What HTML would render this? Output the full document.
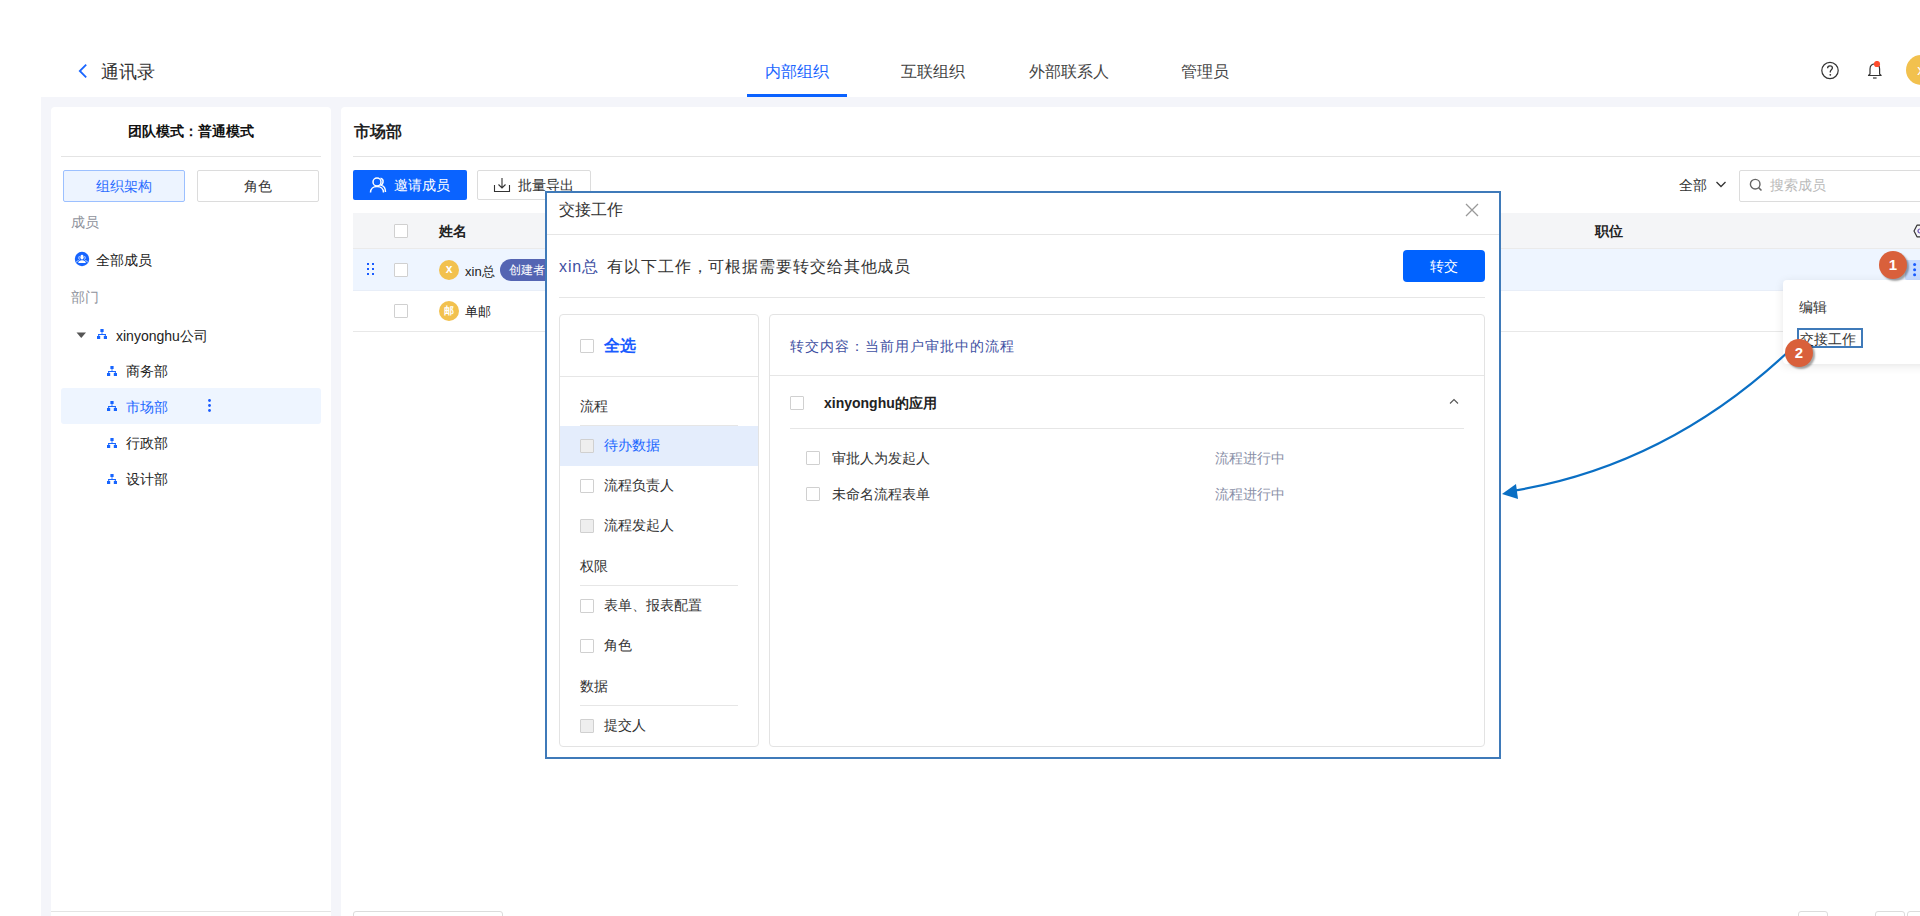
<!DOCTYPE html>
<html><head><meta charset="utf-8">
<style>
*{box-sizing:border-box;margin:0;padding:0}
html,body{width:1920px;height:916px;overflow:hidden;background:#fff;font-family:"Liberation Sans",sans-serif;color:#333}
.a{position:absolute;white-space:nowrap}
.t14{font-size:14px;line-height:14px}
.t13{font-size:13px;line-height:13px}
.t16{font-size:16px;line-height:16px}
.cb{position:absolute;width:14px;height:14px;border:1px solid #d0d0d0;border-radius:1px;background:#fff}
.cb.dis{background:#eeeeee}
</style></head>
<body>
<!-- HEADER -->
<svg class="a" style="left:76px;top:62px" width="14" height="18" viewBox="0 0 14 18"><polyline points="10.2,2.6 3.8,9 10.2,15.4" fill="none" stroke="#1a66ff" stroke-width="1.8"/></svg>
<div class="a" style="left:101px;top:63px;font-size:18px;line-height:18px;color:#333">通讯录</div>

<div class="a t16" style="left:765px;top:64px;color:#1a66ff">内部组织</div>
<div class="a" style="left:747px;top:94px;width:100px;height:3px;background:#0a62ff"></div>
<div class="a t16" style="left:901px;top:64px;color:#444">互联组织</div>
<div class="a t16" style="left:1029px;top:64px;color:#444">外部联系人</div>
<div class="a t16" style="left:1181px;top:64px;color:#444">管理员</div>

<svg class="a" style="left:1820px;top:61px" width="20" height="20" viewBox="0 0 20 20"><circle cx="10" cy="9.5" r="8.2" fill="none" stroke="#333" stroke-width="1.2"/><path d="M7.6 7.3 C7.6 5.6 8.8 4.9 10 4.9 C11.3 4.9 12.4 5.7 12.4 7 C12.4 8.6 10.3 8.8 10.3 10.6 L10.3 11.4" fill="none" stroke="#333" stroke-width="1.3"/><circle cx="10.3" cy="13.8" r="0.9" fill="#333"/></svg>
<svg class="a" style="left:1866px;top:61px" width="18" height="20" viewBox="0 0 18 20"><path d="M2.5 14.5 L4 13 L4 8 C4 4.8 6 2.9 8.8 2.9 C11.6 2.9 13.6 4.8 13.6 8 L13.6 13 L15.1 14.5 Z" fill="none" stroke="#333" stroke-width="1.2" stroke-linejoin="round"/><path d="M7 17 L10.6 17" stroke="#333" stroke-width="1.2"/><circle cx="11" cy="3" r="3.1" fill="#ff4d2e"/></svg>
<div class="a" style="left:1906px;top:55px;width:30px;height:30px;border-radius:50%;background:#f2c14e;color:#fff;font-size:15px;line-height:30px;text-align:center">x</div>

<!-- GRAY BG -->
<div class="a" style="left:41px;top:97px;width:1879px;height:819px;background:#f4f5fa"></div>

<!-- LEFT PANEL -->
<div class="a" style="left:51px;top:107px;width:280px;height:860px;background:#fff;border-radius:4px"></div>
<div class="a t14" style="left:128px;top:124px;font-weight:bold;color:#111">团队模式：普通模式</div>
<div class="a" style="left:61px;top:156px;width:260px;height:1px;background:#e4e4e4"></div>
<div class="a" style="left:63px;top:170px;width:122px;height:32px;border:1px solid #9cc0ff;background:#edf4ff;border-radius:2px"></div>
<div class="a t14" style="left:96px;top:179px;color:#2b6cff">组织架构</div>
<div class="a" style="left:197px;top:170px;width:122px;height:32px;border:1px solid #dcdcdc;background:#fff;border-radius:2px"></div>
<div class="a t14" style="left:244px;top:179px;color:#333">角色</div>
<div class="a t14" style="left:71px;top:215px;color:#8f939c">成员</div>
<svg class="a" style="left:74px;top:251px" width="16" height="16" viewBox="0 0 16 16"><circle cx="8" cy="8" r="7.2" fill="#1664ff"/><ellipse cx="8" cy="6.2" rx="1.6" ry="2.4" fill="#fff"/><path d="M4.2 11.9 C4.3 10.2 5.9 9.2 8 9.2 C10.1 9.2 11.7 10.2 11.8 11.9 Z" fill="#fff"/><path d="M5.6 8.6 C4.6 8.1 4.5 5.8 5.6 5.1 M10.4 8.6 C11.4 8.1 11.5 5.8 10.4 5.1 M2.5 11.3 C2.9 10.1 3.7 9.6 4.6 9.4 M13.5 11.3 C13.1 10.1 12.3 9.6 11.4 9.4" fill="none" stroke="#fff" stroke-width="0.8"/></svg>
<div class="a t14" style="left:96px;top:253px;color:#222">全部成员</div>
<div class="a t14" style="left:71px;top:290px;color:#8f939c">部门</div>
<svg class="a" style="left:76px;top:332px" width="11" height="7" viewBox="0 0 11 7"><path d="M0.5 0.5 L10 0.5 L5.25 6 Z" fill="#555"/></svg>
<div class="a t14" style="left:116px;top:329px;color:#222">xinyonghu公司</div>
<div class="a t14" style="left:126px;top:364px;color:#222">商务部</div>
<div class="a" style="left:61px;top:388px;width:260px;height:36px;background:#eef5ff;border-radius:3px"></div>
<div class="a t14" style="left:126px;top:400px;color:#1a66ff">市场部</div>
<div class="a t14" style="left:126px;top:436px;color:#222">行政部</div>
<div class="a t14" style="left:126px;top:472px;color:#222">设计部</div>
<svg class="a" style="left:97px;top:329px" width="10" height="10" viewBox="0 0 10 10"><g fill="#1664ff"><rect x="3.4" y="0" width="3.2" height="3"/><rect x="4.6" y="3" width="0.8" height="2"/><rect x="1.2" y="5" width="7.6" height="1"/><rect x="1.2" y="5" width="1" height="2"/><rect x="7.8" y="5" width="1" height="2"/><rect x="0" y="7" width="3.2" height="3"/><rect x="6.8" y="7" width="3.2" height="3"/></g></svg><svg class="a" style="left:107px;top:366px" width="10" height="10" viewBox="0 0 10 10"><g fill="#1664ff"><rect x="3.4" y="0" width="3.2" height="3"/><rect x="4.6" y="3" width="0.8" height="2"/><rect x="1.2" y="5" width="7.6" height="1"/><rect x="1.2" y="5" width="1" height="2"/><rect x="7.8" y="5" width="1" height="2"/><rect x="0" y="7" width="3.2" height="3"/><rect x="6.8" y="7" width="3.2" height="3"/></g></svg><svg class="a" style="left:107px;top:401px" width="10" height="10" viewBox="0 0 10 10"><g fill="#1664ff"><rect x="3.4" y="0" width="3.2" height="3"/><rect x="4.6" y="3" width="0.8" height="2"/><rect x="1.2" y="5" width="7.6" height="1"/><rect x="1.2" y="5" width="1" height="2"/><rect x="7.8" y="5" width="1" height="2"/><rect x="0" y="7" width="3.2" height="3"/><rect x="6.8" y="7" width="3.2" height="3"/></g></svg><svg class="a" style="left:107px;top:438px" width="10" height="10" viewBox="0 0 10 10"><g fill="#1664ff"><rect x="3.4" y="0" width="3.2" height="3"/><rect x="4.6" y="3" width="0.8" height="2"/><rect x="1.2" y="5" width="7.6" height="1"/><rect x="1.2" y="5" width="1" height="2"/><rect x="7.8" y="5" width="1" height="2"/><rect x="0" y="7" width="3.2" height="3"/><rect x="6.8" y="7" width="3.2" height="3"/></g></svg><svg class="a" style="left:107px;top:474px" width="10" height="10" viewBox="0 0 10 10"><g fill="#1664ff"><rect x="3.4" y="0" width="3.2" height="3"/><rect x="4.6" y="3" width="0.8" height="2"/><rect x="1.2" y="5" width="7.6" height="1"/><rect x="1.2" y="5" width="1" height="2"/><rect x="7.8" y="5" width="1" height="2"/><rect x="0" y="7" width="3.2" height="3"/><rect x="6.8" y="7" width="3.2" height="3"/></g></svg><svg class="a" style="left:206px;top:398px" width="8" height="16" viewBox="0 0 8 16"><g fill="#1a5cff"><circle cx="3.5" cy="2.5" r="1.4"/><circle cx="3.5" cy="7.5" r="1.4"/><circle cx="3.5" cy="12.5" r="1.4"/></g></svg>
<div class="a" style="left:51px;top:911px;width:280px;height:1px;background:#e4e4e4"></div>

<!-- RIGHT PANEL -->
<div class="a" style="left:341px;top:107px;width:1640px;height:860px;background:#fff;border-radius:4px"></div>
<div class="a" style="left:354px;top:124px;font-size:16px;line-height:16px;font-weight:bold;color:#222">市场部</div>
<div class="a" style="left:353px;top:156px;width:1600px;height:1px;background:#e4e4e4"></div>


<!-- toolbar -->
<div class="a" style="left:353px;top:170px;width:114px;height:30px;background:#0a63ff;border-radius:2px"></div>
<svg class="a" style="left:369px;top:176px" width="18" height="18" viewBox="0 0 18 18"><circle cx="8" cy="6" r="4" fill="none" stroke="#fff" stroke-width="1.5"/><path d="M1.5 16.5 C1.5 12.5 4.5 10.5 8 10.5 C11.5 10.5 14.5 12.5 14.5 16.5" fill="none" stroke="#fff" stroke-width="1.5"/><path d="M11.5 2.3 C13.5 2.8 14.3 4.5 14 6.3 C13.8 7.6 13 8.6 12 9.1 C14.6 9.8 16.5 12 16.5 16" fill="none" stroke="#fff" stroke-width="1.5"/></svg>
<div class="a t14" style="left:394px;top:178px;color:#fff">邀请成员</div>
<div class="a" style="left:477px;top:170px;width:114px;height:30px;background:#fff;border:1px solid #dcdcdc;border-radius:2px"></div>
<svg class="a" style="left:493px;top:176px" width="18" height="18" viewBox="0 0 18 18"><path d="M1.5 9 L1.5 15.5 L16.5 15.5 L16.5 9" fill="none" stroke="#333" stroke-width="1.1"/><path d="M9 2 L9 12 M5.5 8.5 L9 12 L12.5 8.5" fill="none" stroke="#333" stroke-width="1.1"/></svg>
<div class="a t14" style="left:518px;top:178px;color:#333">批量导出</div>

<div class="a t14" style="left:1679px;top:178px;color:#333">全部</div>
<svg class="a" style="left:1715px;top:180px" width="12" height="9" viewBox="0 0 12 9"><polyline points="1.5,2 6,6.5 10.5,2" fill="none" stroke="#333" stroke-width="1.3"/></svg>
<div class="a" style="left:1739px;top:170px;width:240px;height:32px;border:1px solid #dcdcdc;border-radius:2px;background:#fff"></div>
<svg class="a" style="left:1749px;top:178px" width="14" height="14" viewBox="0 0 14 14"><circle cx="6.2" cy="6.2" r="4.8" fill="none" stroke="#666" stroke-width="1.4"/><path d="M9.6 9.6 L12.5 12.5" stroke="#666" stroke-width="1.5"/></svg>
<div class="a t14" style="left:1770px;top:178px;color:#bbb">搜索成员</div>

<!-- table -->
<div class="a" style="left:353px;top:213px;width:1600px;height:36px;background:#f4f5f7;border-bottom:1px solid #eaeaea"></div>
<div class="cb" style="left:394px;top:224px"></div>
<div class="a t14" style="left:439px;top:224px;font-weight:bold;color:#222">姓名</div>
<div class="a t14" style="left:1595px;top:224px;font-weight:bold;color:#222">职位</div>
<svg class="a" style="left:1913px;top:224px" width="14" height="14" viewBox="0 0 14 14"><path d="M4 1.2 L10 1.2 L13 7 L10 12.8 L4 12.8 L1 7 Z" fill="none" stroke="#333" stroke-width="1.2" stroke-linejoin="round"/><circle cx="7" cy="7" r="2" fill="none" stroke="#6a4fb0" stroke-width="1.2"/></svg>
<div class="a" style="left:353px;top:249px;width:1600px;height:42px;background:#eef5ff;border-bottom:1px solid #e8eef8"></div>
<svg class="a" style="left:366px;top:262px" width="10" height="14" viewBox="0 0 10 14"><g fill="#1a5cff"><rect x="1" y="1" width="2" height="2"/><rect x="6" y="1" width="2" height="2"/><rect x="1" y="6" width="2" height="2"/><rect x="6" y="6" width="2" height="2"/><rect x="1" y="11" width="2" height="2"/><rect x="6" y="11" width="2" height="2"/></g></svg>
<div class="cb" style="left:394px;top:263px"></div>
<div class="a" style="left:439px;top:260px;width:20px;height:20px;border-radius:50%;background:#f2c14e;color:#fff;font-size:12px;line-height:19px;text-align:center;font-weight:bold">x</div>
<div class="a t13" style="left:465px;top:265px;color:#222">xin总</div>
<div class="a" style="left:500px;top:259px;width:60px;height:22px;border-radius:11px;background:#5465b3;color:#fff;font-size:12px;line-height:22px;padding-left:9px">创建者</div>
<div class="a" style="left:1905px;top:260px;width:30px;height:20px;background:#c8dcff;border-radius:2px"></div>
<svg class="a" style="left:1911px;top:262px" width="8" height="16" viewBox="0 0 8 16"><g fill="#1a5cff"><circle cx="3.6" cy="2.5" r="1.5"/><circle cx="3.6" cy="7.7" r="1.5"/><circle cx="3.6" cy="12.7" r="1.5"/></g></svg>
<div class="a" style="left:353px;top:291px;width:1600px;height:41px;background:#fff;border-bottom:1px solid #e8e8e8"></div>
<div class="cb" style="left:394px;top:304px"></div>
<div class="a" style="left:439px;top:301px;width:20px;height:20px;border-radius:50%;background:#f2c14e;color:#fff;font-size:10px;line-height:20px;text-align:center;font-weight:bold">邮</div>
<div class="a t13" style="left:465px;top:305px;color:#222">单邮</div>

<!-- bottom pagination stubs -->
<div class="a" style="left:353px;top:911px;width:150px;height:30px;border:1px solid #dcdcdc;border-radius:3px;background:#fff"></div>
<div class="a" style="left:1798px;top:911px;width:30px;height:30px;border:1px solid #dcdcdc;border-radius:3px;background:#fff"></div>
<div class="a" style="left:1875px;top:911px;width:30px;height:30px;border:1px solid #dcdcdc;border-radius:3px;background:#fff"></div>
<div class="a" style="left:1907px;top:911px;width:30px;height:30px;border:1px solid #dcdcdc;border-radius:3px;background:#fff"></div>


<!-- DIALOG -->
<div class="a" style="left:545px;top:191px;width:956px;height:568px;background:#fff;border:2px solid #3f7ab9"></div>
<div class="a t16" style="left:559px;top:202px;color:#333">交接工作</div>
<svg class="a" style="left:1464px;top:202px" width="16" height="16" viewBox="0 0 16 16"><path d="M2 2 L14 14 M14 2 L2 14" stroke="#999" stroke-width="1.3"/></svg>
<div class="a" style="left:547px;top:234px;width:952px;height:1px;background:#e6e6e6"></div>
<div class="a t16" style="left:559px;top:259px;color:#333;letter-spacing:0.9px"><span style="color:#3f51a3;margin-right:8px">xin总</span>有以下工作，可根据需要转交给其他成员</div>
<div class="a" style="left:1403px;top:250px;width:82px;height:32px;background:#0062ff;border-radius:4px;color:#fff;font-size:14px;line-height:32px;text-align:center">转交</div>
<div class="a" style="left:559px;top:297px;width:926px;height:1px;background:#e6e6e6"></div>

<div class="a" style="left:559px;top:314px;width:200px;height:433px;border:1px solid #e3e3e3;border-radius:4px"></div>
<div class="cb" style="left:580px;top:339px"></div>
<div class="a t16" style="left:604px;top:338px;color:#1a5cff;font-weight:bold">全选</div>
<div class="a" style="left:560px;top:376px;width:198px;height:1px;background:#e6e6e6"></div>
<div class="a t14" style="left:580px;top:399px;color:#333">流程</div>
<div class="a" style="left:580px;top:425px;width:158px;height:1px;background:#e6e6e6"></div>
<div class="a" style="left:560px;top:426px;width:198px;height:40px;background:#e4edfc"></div>
<div class="cb dis" style="left:580px;top:439px"></div>
<div class="a t14" style="left:604px;top:438px;color:#1a66ff">待办数据</div>
<div class="cb" style="left:580px;top:479px"></div>
<div class="a t14" style="left:604px;top:478px;color:#333">流程负责人</div>
<div class="cb dis" style="left:580px;top:519px"></div>
<div class="a t14" style="left:604px;top:518px;color:#333">流程发起人</div>
<div class="a t14" style="left:580px;top:559px;color:#333">权限</div>
<div class="a" style="left:580px;top:585px;width:158px;height:1px;background:#e6e6e6"></div>
<div class="cb" style="left:580px;top:599px"></div>
<div class="a t14" style="left:604px;top:598px;color:#333">表单、报表配置</div>
<div class="cb" style="left:580px;top:639px"></div>
<div class="a t14" style="left:604px;top:638px;color:#333">角色</div>
<div class="a t14" style="left:580px;top:679px;color:#333">数据</div>
<div class="a" style="left:580px;top:705px;width:158px;height:1px;background:#e6e6e6"></div>
<div class="cb dis" style="left:580px;top:719px"></div>
<div class="a t14" style="left:604px;top:718px;color:#333">提交人</div>

<div class="a" style="left:769px;top:314px;width:716px;height:433px;border:1px solid #e3e3e3;border-radius:4px"></div>
<div class="a t14" style="left:790px;top:339px;color:#3f51a3;letter-spacing:1px">转交内容：当前用户审批中的流程</div>
<div class="a" style="left:770px;top:375px;width:714px;height:1px;background:#e6e6e6"></div>
<div class="cb" style="left:790px;top:396px"></div>
<div class="a t14" style="left:824px;top:396px;color:#222;font-weight:bold">xinyonghu的应用</div>
<svg class="a" style="left:1448px;top:396px" width="12" height="10" viewBox="0 0 12 10"><polyline points="2,7.5 6,3.5 10,7.5" fill="none" stroke="#555" stroke-width="1.1"/></svg>
<div class="a" style="left:790px;top:428px;width:674px;height:1px;background:#e6e6e6"></div>
<div class="cb" style="left:806px;top:451px"></div>
<div class="a t14" style="left:832px;top:451px;color:#333">审批人为发起人</div>
<div class="a t14" style="left:1215px;top:451px;color:#8a90a8">流程进行中</div>
<div class="cb" style="left:806px;top:487px"></div>
<div class="a t14" style="left:832px;top:487px;color:#333">未命名流程表单</div>
<div class="a t14" style="left:1215px;top:487px;color:#8a90a8">流程进行中</div>

<!-- DROPDOWN -->
<div class="a" style="left:1783px;top:280px;width:160px;height:84px;background:#fff;border-radius:4px;box-shadow:0 2px 10px rgba(0,0,0,0.10)"></div>
<div class="a t14" style="left:1799px;top:300px;color:#333">编辑</div>
<div class="a t14" style="left:1800px;top:332px;color:#333">交接工作</div>
<div class="a" style="left:1797px;top:328px;width:66px;height:20px;border:2px solid #3f7ab9"></div>

<!-- ARROW -->
<svg class="a" style="left:0;top:0" width="1920" height="916" viewBox="0 0 1920 916">
<path d="M1790 350 Q1667 466 1512 491" fill="none" stroke="#0a6fc4" stroke-width="2.2"/>
<path d="M1502 494 L1516 484 L1518 499 Z" fill="#0a6fc4"/>
</svg>

<!-- MARKERS -->
<div class="a" style="left:1879px;top:251px;width:28px;height:28px;border-radius:50%;background:#d9603b;color:#fff;font-weight:bold;font-size:15px;line-height:28px;text-align:center;box-shadow:2px 2px 2px rgba(0,0,0,0.35)">1</div>
<div class="a" style="left:1785px;top:339px;width:28px;height:28px;border-radius:50%;background:#d9603b;color:#fff;font-weight:bold;font-size:15px;line-height:28px;text-align:center;box-shadow:2px 2px 2px rgba(0,0,0,0.35)">2</div>

</body></html>
